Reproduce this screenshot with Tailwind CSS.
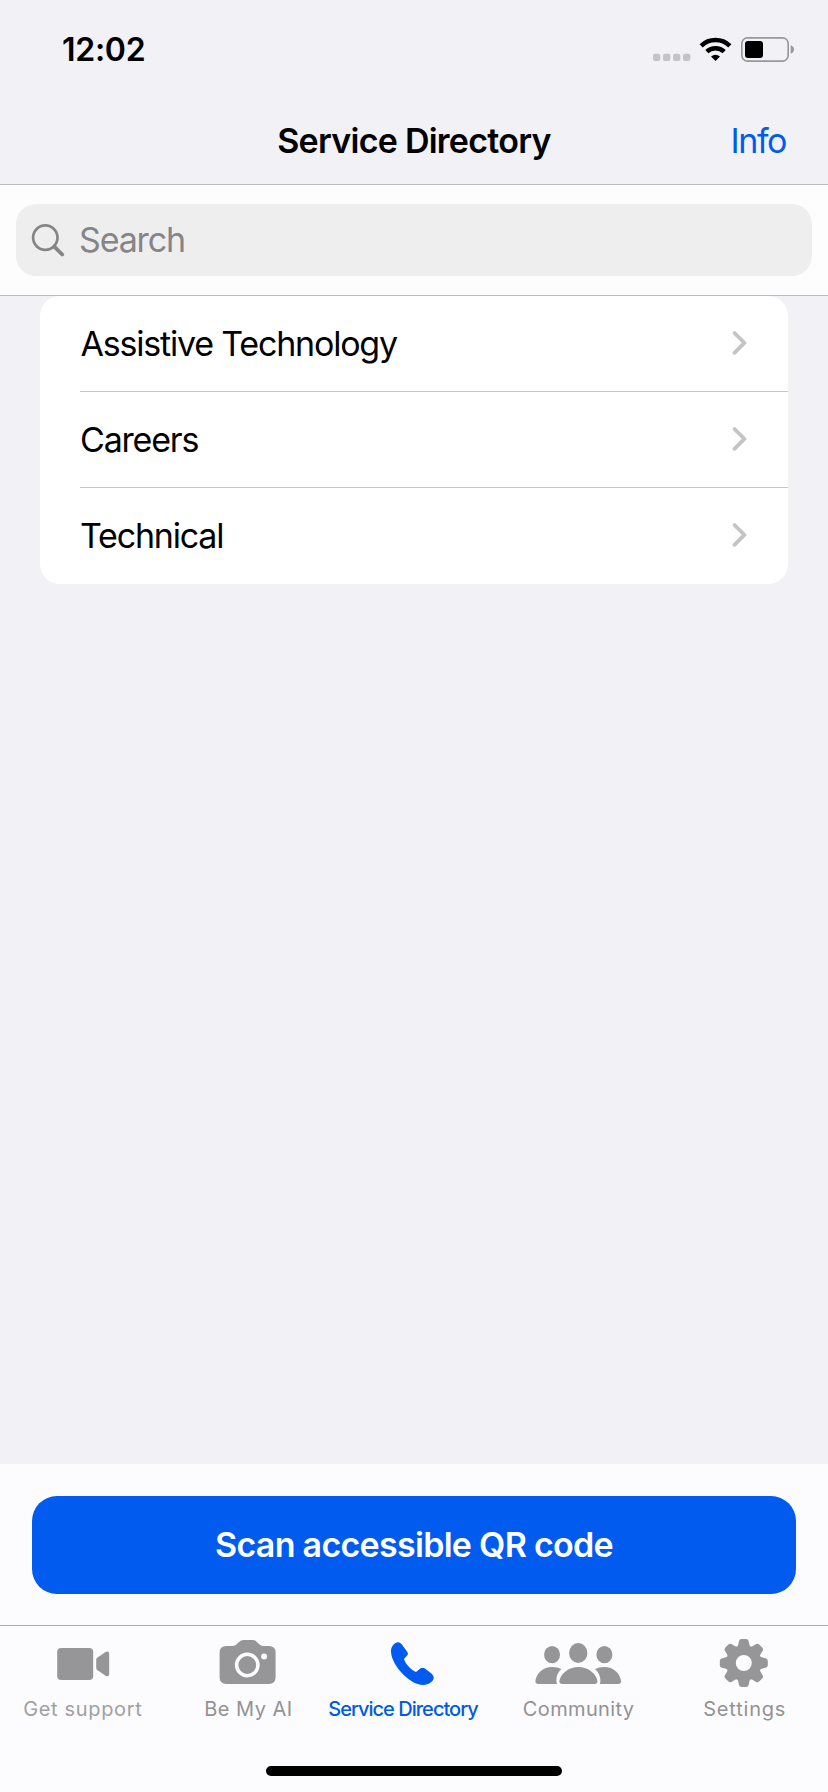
<!DOCTYPE html>
<html lang="en">
<head>
<meta charset="utf-8">
<meta name="viewport" content="width=device-width, initial-scale=1">
<title>Service Directory</title>
<script src="https://cdn.jsdelivr.net/npm/@tailwindcss/browser@4"></script>
</head>
<body class="flex h-[1792px] w-[828px] flex-col overflow-hidden bg-[#f1f1f6] font-['Inter','Liberation_Sans',sans-serif] text-black">

  <!-- Status bar -->
  <div class="flex h-24 shrink-0 items-center pt-[4px] pl-[62px]">
    <span class="text-[32px] leading-none font-semibold tracking-[-0.27px]">12:02</span>
    <svg class="mr-[18px] mb-px ml-auto h-[50px] w-[170px]" viewBox="0 0 510 150" aria-label="Signal, Wi-Fi and battery">
      <g fill="#c3c3c8">
        <rect x="39" y="86" width="22" height="22" rx="6"/>
        <rect x="69" y="86" width="22" height="22" rx="6"/>
        <rect x="99" y="86" width="22" height="22" rx="6"/>
        <rect x="129" y="86" width="22" height="22" rx="6"/>
      </g>
      <g fill="none" stroke="#000" stroke-width="13.5">
        <path d="M183.500 62.500A62 62 0 0 1 269.500 62.500"/>
        <path d="M200.500 80A37.500 37.500 0 0 1 252.500 80"/>
      </g>
      <path d="M226.500 108L213 94.500Q226.500 83.500 240 94.500Z"/>
      <rect x="305.500" y="38.500" width="139" height="70" rx="17" fill="none" stroke="#98989d" stroke-width="5"/>
      <rect x="315" y="48" width="54" height="51" rx="9"/>
      <path d="M452 61Q462 65 462 73.500Q462 82 452 86Z" fill="#98989d"/>
    </svg>
  </div>

  <!-- Navigation bar -->
  <header class="grid h-[89px] shrink-0 grid-cols-[1fr_auto_1fr] items-center border-b border-[#bcbcc0] pt-px text-[34px] leading-none">
    <span></span>
    <h1 class="font-semibold tracking-[-0.74px]">Service Directory</h1>
    <a class="justify-self-end pr-[42px] tracking-[-1.44px] text-[#005cee]">Info</a>
  </header>

  <!-- Search -->
  <div class="h-[111px] shrink-0 border-b border-[#bcbcc0] bg-[#fdfdfd] px-4 pt-[19px]">
    <div class="flex h-18 items-center rounded-[20px] bg-[#eeeeee] pl-[15px] text-[34px] leading-none tracking-[-1.15px] text-[#858587]">
      <svg class="mr-[14px] h-[34px] w-[34px]" viewBox="0 0 34 34" fill="none" stroke="#858587" stroke-linecap="round">
        <circle cx="14.300" cy="14.600" r="12.200" stroke-width="2.700"/>
        <path d="M23.300 23.600L31.200 31.500" stroke-width="3.800"/>
      </svg>
      <span>Search</span>
    </div>
  </div>

  <!-- Service list -->
  <main class="grow px-10">
    <ul class="rounded-[20px] bg-white pl-10 text-[34px] leading-none tracking-[-1.2px]">
      <li class="flex h-24 items-center justify-between border-b border-[#c6c6c8] pr-[41px] pl-[0.5px]">
        <span>Assistive Technology</span>
        <svg class="mb-px h-6 w-[15px]" viewBox="0 0 15 24" fill="none" stroke="#c4c4c6" stroke-width="3.800" stroke-linecap="round" stroke-linejoin="round"><path d="M2.500 2L12.400 11.900L2.500 21.800"/></svg>
      </li>
      <li class="flex h-24 items-center justify-between border-b border-[#c6c6c8] pr-[41px]">
        <span>Careers</span>
        <svg class="mb-px h-6 w-[15px]" viewBox="0 0 15 24" fill="none" stroke="#c4c4c6" stroke-width="3.800" stroke-linecap="round" stroke-linejoin="round"><path d="M2.500 2L12.400 11.900L2.500 21.800"/></svg>
      </li>
      <li class="flex h-24 items-center justify-between pr-[41px] pb-px">
        <span>Technical</span>
        <svg class="mb-px h-6 w-[15px]" viewBox="0 0 15 24" fill="none" stroke="#c4c4c6" stroke-width="3.800" stroke-linecap="round" stroke-linejoin="round"><path d="M2.500 2L12.400 11.900L2.500 21.800"/></svg>
      </li>
    </ul>
  </main>

  <!-- Scan button -->
  <div class="h-[162px] shrink-0 border-b border-[#acacaf] bg-[#fcfcfe] px-8 pt-8">
    <button class="flex h-[98px] w-full items-center justify-center rounded-[25px] bg-[#005bee] text-[34px] leading-none font-semibold tracking-[-0.71px] text-white">Scan accessible QR code</button>
  </div>

  <!-- Tab bar -->
  <nav class="grid h-[166px] shrink-0 grid-cols-5 bg-[#fcfcfe] pt-[13px] text-[20px] leading-[24px] text-[#929294]">
    <a class="flex flex-col items-center gap-[10px] whitespace-nowrap">
      <svg class="h-12 w-[100px]" viewBox="38.400 57 300 144" fill="#969698">
        <rect x="111" y="84" width="108" height="96" rx="12"/>
        <path d="M228 119Q228 116 231 113L256 96Q267 91 267 101V162Q267 173 256 167L231 150Q228 147 228 144Z"/>
      </svg>
      <span class="font-normal tracking-[0.65px] text-[#a0a0a2]">Get support</span>
    </a>
    <a class="flex flex-col items-center gap-[10px] whitespace-nowrap">
      <svg class="h-12 w-[100px]" viewBox="535.200 57 300 144">
        <path fill="#969698" d="M620 78H640Q646 78 651 73L659 65Q664 60 672 60H699Q707 60 711 65L719 73Q724 78 730 78H748Q768 78 768 98V172Q768 192 748 192H620Q600 192 600 172V98Q600 78 620 78Z"/>
        <circle cx="683" cy="135" r="32" fill="none" stroke="#fcfcfe" stroke-width="10.500"/>
        <circle cx="733.500" cy="109.500" r="9" fill="#fcfcfe"/>
      </svg>
      <span class="font-normal tracking-[0.45px]">Be My AI</span>
    </a>
    <a class="flex flex-col items-center gap-[10px] whitespace-nowrap text-[#005bdf]">
      <svg class="h-12 w-[100px]" viewBox="162 57 300 144" fill="#005bee">
        <path d="M243 93C243 80 254 67 264 67Q270 67 275 73L292 96Q296 101 292 106L282 117C287 133 302 149 318 156L332 145Q337 142 344 145L365 161Q372 167 371 175C370 185 355 195 340 195C318 195 292 178 272 155C253 133 243 111 243 93Z"/>
      </svg>
      <span class="pr-[22px] font-medium tracking-[-0.98px]">Service Directory</span>
    </a>
    <a class="flex flex-col items-center gap-[10px] whitespace-nowrap">
      <svg class="h-12 w-[100px]" viewBox="58.800 57 300 144" fill="#969698">
        <ellipse cx="125" cy="104" rx="24" ry="26"/>
        <ellipse cx="282" cy="104" rx="24" ry="26"/>
        <ellipse cx="203.500" cy="99" rx="27.500" ry="30"/>
        <path d="M147 184C149 162 175 141 204 141S259 162 261 184Q261 192 252 192H156Q147 192 147 184Z"/>
        <path d="M75 184C77 160 98 141 125 141Q142 141 153 147Q137 162 138 183Q138 188 140 192H84Q75 192 75 184Z"/>
        <path d="M332 184C330 160 309 141 282 141Q265 141 254 147Q270 162 270 183Q270 188 268 192H323Q332 192 332 184Z"/>
      </svg>
      <span class="pr-[2px] font-normal tracking-[0.35px]">Community</span>
    </a>
    <a class="flex flex-col items-center gap-[10px] whitespace-nowrap">
      <svg class="h-12 w-[100px]" viewBox="555.600 57 300 144" fill="#969698">
        <defs>
          <path id="tooth" d="M-22 -44L-17 -54L-14.500 -65Q-13 -72 -7 -72H7Q13 -72 14.500 -65L17 -54L22 -44Z"/>
        </defs>
        <g transform="translate(702 129)">
          <circle r="38.500" fill="none" stroke="#969698" stroke-width="29"/>
          <use href="#tooth"/>
          <use href="#tooth" transform="rotate(45)"/>
          <use href="#tooth" transform="rotate(90)"/>
          <use href="#tooth" transform="rotate(135)"/>
          <use href="#tooth" transform="rotate(180)"/>
          <use href="#tooth" transform="rotate(225)"/>
          <use href="#tooth" transform="rotate(270)"/>
          <use href="#tooth" transform="rotate(315)"/>
        </g>
      </svg>
      <span class="pr-px font-normal tracking-[0.8px]">Settings</span>
    </a>
    <div class="col-span-5 mt-auto mb-4 h-[10px] w-[296px] justify-self-center rounded-full bg-black"></div>
  </nav>
</body>
</html>
